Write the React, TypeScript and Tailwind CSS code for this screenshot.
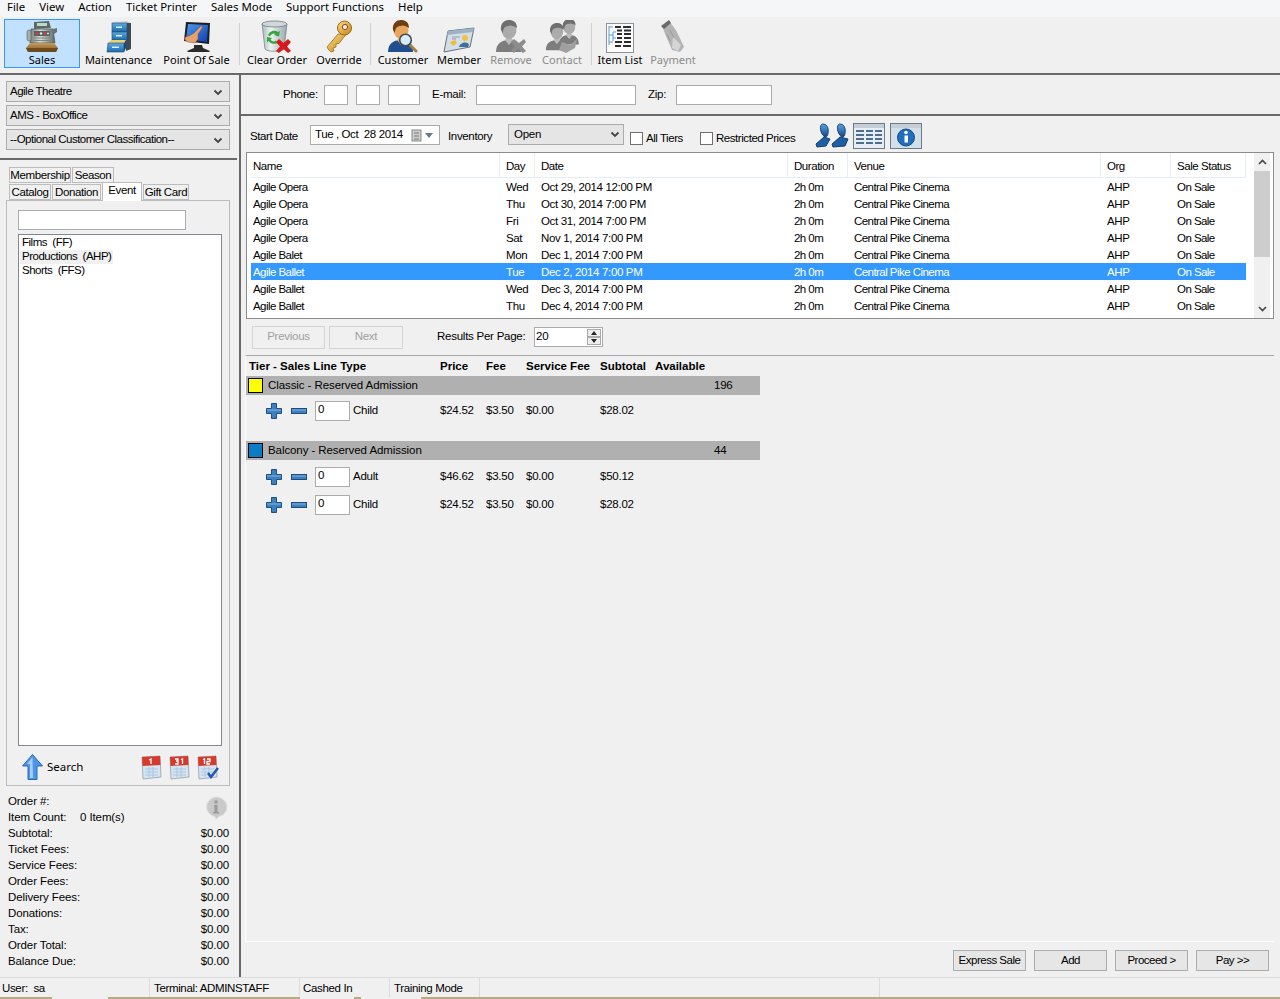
import React from "react";

const Chevron = () => (
  <svg width="10" height="7" viewBox="0 0 10 7" className="shrink-0"><path d="M1.500 1.500 5 5l3.500-3.500" fill="none" stroke="#444" strokeWidth="1.800" /></svg>
);

const Register = () => (
  <svg width="32" height="33" viewBox="0 0 32 33">
    <defs>
      <linearGradient id="rg" x1="0" x2="1" y1="0" y2="0"><stop offset="0" stopColor="#6f7a76" /><stop offset=".4" stopColor="#d5dcd9" /><stop offset="1" stopColor="#5f6a66" /></linearGradient>
      <linearGradient id="wd" x1="0" x2="0" y1="0" y2="1"><stop offset="0" stopColor="#c99a58" /><stop offset="1" stopColor="#7c5526" /></linearGradient>
    </defs>
    <path d="M8 2 23 1l2 7-17 1z" fill="#5e6965" />
    <rect x="11" y="3" width="10" height="3" fill="#b7ddc8" />
    <path d="M5 9h22l2 14H4z" fill="url(#rg)" stroke="#4c5552" strokeWidth=".7" />
    <rect x="8" y="11" width="16" height="5" fill="#59625f" />
    <circle cx="11" cy="13.500" r="1.200" fill="#e23b3b" /><circle cx="15" cy="13.500" r="1.200" fill="#e8e8e8" /><circle cx="19" cy="13.500" r="1.200" fill="#e23b3b" /><circle cx="22" cy="13.500" r="1" fill="#e8e8e8" />
    <path d="M7 18h18M7 20.500h18" stroke="#7d8784" />
    <path d="M27 9l4-1v4l-3 2z" fill="#69736f" />
    <rect x="1" y="10" width="4" height="11" rx="2" fill="#a3adaa" stroke="#5c6662" strokeWidth=".6" />
    <path d="M4 23h24l4 5-2 4H2l-2-4z" fill="url(#wd)" />
    <path d="M0 28h32l-2 4H2z" fill="#6d4a1c" />
  </svg>
);
const Cabinet = () => (
  <svg width="26" height="33" viewBox="0 0 26 33">
    <defs><linearGradient id="dr" x1="0" x2="0" y1="0" y2="1"><stop offset="0" stopColor="#5ea9e0" /><stop offset="1" stopColor="#1d6cb0" /></linearGradient></defs>
    <path d="M6 2 21 1l4 2-15 1z" fill="#c9d3da" />
    <path d="M20 3h5v26l-5 2z" fill="#3d4b55" />
    <rect x="6" y="3" width="15" height="9" fill="url(#dr)" stroke="#1f4b73" strokeWidth=".6" />
    <rect x="6" y="12" width="15" height="8" fill="url(#dr)" stroke="#1f4b73" strokeWidth=".6" />
    <rect x="10" y="6.500" width="6" height="1.500" fill="#dff0fb" /><rect x="10" y="15" width="6" height="1.500" fill="#dff0fb" />
    <path d="M5 20h15l-2 3H2z" fill="#f0d36a" />
    <path d="M2 23h16v9H1z" fill="url(#dr)" stroke="#1f4b73" strokeWidth=".6" />
    <path d="M18 23l2-3v8l-2 4z" fill="#1a4a78" />
    <rect x="6" y="26.500" width="7" height="1.500" fill="#dff0fb" />
  </svg>
);
const Monitor = () => (
  <svg width="30" height="32" viewBox="0 0 30 32">
    <defs><linearGradient id="sc" x1="0" x2="1" y1="0" y2="1"><stop offset="0" stopColor="#4d9bf0" /><stop offset="1" stopColor="#0f3fb0" /></linearGradient></defs>
    <path d="M4 1l24 1-1 21-25-3z" fill="#1e1e1e" />
    <path d="M6 3l20 1-1 17-21-3z" fill="url(#sc)" />
    <path d="M3 19c-1-3 2-4 4-4l5-3 7-7 1.500 1.500-4.500 6.500 0 5-3 4-7-1z" fill="#e4a272" stroke="#92552c" strokeWidth=".5" />
    <path d="M12 24h8l1 3 7 3-1 1H6l-1-1 7-3z" fill="#2a2a2a" />
  </svg>
);
const Bin = () => (
  <svg width="32" height="33" viewBox="0 0 32 33">
    <defs><linearGradient id="bn" x1="0" x2="1" y1="0" y2="0"><stop offset="0" stopColor="#a9b7ba" /><stop offset=".35" stopColor="#eef3f3" /><stop offset="1" stopColor="#98a6aa" /></linearGradient></defs>
    <path d="M1 4l3 25c1 3 18 3 19 0l3-25z" fill="url(#bn)" stroke="#7d8a8f" strokeWidth=".8" />
    <ellipse cx="13.500" cy="4" rx="12.500" ry="3" fill="#cfd9dc" stroke="#6d7a80" strokeWidth=".8" />
    <path d="M7 15a6.500 6.500 0 0 1 10-3l2-1-1 5.500-5-1.500 1.500-1a4 4 0 0 0-5.500 2.500zM6 17l5 1-1.500 1.500a4 4 0 0 0 5.500 1l1.500 2.500a7 7 0 0 1-9-2l-1.500 1.500z" fill="#35a83d" />
    <path d="M18 19l4.500 4 4.500-4 3 3-4 4.500 4 4.500-3 2-4.500-4-4.500 4-3-2 4-4.500-4-4.500z" fill="#d8191c" />
  </svg>
);
const KeyIcon = () => (
  <svg width="28" height="33" viewBox="0 0 28 33">
    <defs><linearGradient id="ky" x1="0" x2="1" y1="0" y2="1"><stop offset="0" stopColor="#f7dd7f" /><stop offset="1" stopColor="#c5841c" /></linearGradient></defs>
    <path d="M13 14 2 27l1 2 3 3 3-1-1-3 3-1 0-3 3-.5 7-9z" fill="url(#ky)" stroke="#8f5f10" strokeWidth=".7" />
    <circle cx="19.500" cy="8" r="7" fill="url(#ky)" stroke="#9a6a14" />
    <circle cx="20" cy="7" r="2.600" fill="#f0f0f0" stroke="#9f3b24" />
  </svg>
);
const Person = ({ gray = false }: { gray?: boolean }) => (
  <g>
    <path d="M1 32c0-8 5-12 13-12s12 4 12 12z" fill={gray ? "#7d7d7d" : "#1f4f8f"} />
    <path d="M10 20l4 5 4-5-2-3h-4z" fill={gray ? "#bcbcbc" : "#edbb85"} />
    <ellipse cx="14" cy="10" rx="7.500" ry="9" fill={gray ? "#ababab" : "#e8a75f"} />
    <path d="M6 10C5 3 10 0 14 0s8 2 8 8c-3-2-6-3-8-2-3 0-6 1-6 7z" fill={gray ? "#6f6f6f" : "#6e3d12"} />
  </g>
);
const Customer = () => (
  <svg width="32" height="33" viewBox="0 0 32 33">
    <Person />
    <path d="m22 24 7 7" stroke="#a37f44" strokeWidth="3" strokeLinecap="round" />
    <circle cx="18.500" cy="20" r="5.800" fill="#d7ecf8" stroke="#3f4b55" strokeWidth="1.600" />
  </svg>
);
const Member = () => (
  <svg width="32" height="26" viewBox="0 0 32 26">
    <path d="M5 4 31 1l-4 19L1 25z" fill="#d3dee7" stroke="#66727d" />
    <path d="M5 4 31 1l-1 4L4 8z" fill="#9db2c4" />
    <path d="M7 15l5-2 2 3-4 3z" fill="#eebd37" />
    <circle cx="22" cy="11" r="3" fill="#f0c23d" />
    <path d="M16 20c1-5 9-6 10-2l-1 2z" fill="#3d6fa5" />
    <path d="M9 10h8M9 12h4" stroke="#8da0b0" />
  </svg>
);
const RemoveIcon = () => (
  <svg width="32" height="33" viewBox="0 0 32 33">
    <Person gray />
    <path d="m16 22 3-3 5 4 5-4 2 3-4 4.500 4 4.500-3 2-5-4-4 4-3-2 4-5z" fill="#8d8d8d" />
  </svg>
);
const ContactIcon = () => (
  <svg width="34" height="33" viewBox="0 0 34 33">
    <g transform="translate(13 -1) scale(.8)"><Person gray /></g>
    <g transform="translate(0 3) scale(.85)"><Person gray /></g>
    <path d="m17 22 8 3 7-6-2 9-9 5-7-3z" fill="#a0a0a0" />
  </svg>
);
const ItemList = () => (
  <svg width="28" height="30" viewBox="0 0 28 30">
    <rect x=".5" y=".5" width="27" height="29" fill="#fbfbfb" stroke="#8c939a" />
    <path d="M3 3v19M3 4h4M3 12h4M3 19h4M7 9v9M7 9h3M7 15h3" fill="none" stroke="#5c9bd6" />
    <path d="M9 4h6M17 4h8M11 7.500h5M18 7.500h7M11 11h5M18 11h7M11 15h5M18 15h7M9 19h7M18 19h7M9 23h6M17 23h8" stroke="#2c2c2c" strokeWidth="2" />
  </svg>
);
const Payment = () => (
  <svg width="24" height="33" viewBox="0 0 24 33">
    <path d="M1 6 8 1l4 5 4 6 7 15-4 5-8-2-6-14z" fill="#b4b4b4" />
    <path d="M0 6l8-6 2 3-7 6z" fill="#6a6a6a" />
    <path d="M12 17l8 8-3 6-6-3z" fill="#d6d6d6" />
    <path d="M9 10l4 8M6 14l3 7" stroke="#9a9a9a" fill="none" />
  </svg>
);

const tools: { w: string; label: string; icon: React.ReactNode; off?: boolean; sep?: boolean }[] = [
  { w: "w-[77px]", label: "Maintenance", icon: <Cabinet /> },
  { w: "w-[79px]", label: "Point Of Sale", icon: <Monitor /> },
  { w: "w-[6px]", label: "", icon: null, sep: true },
  { w: "w-[70px]", label: "Clear Order", icon: <Bin /> },
  { w: "w-[54px]", label: "Override", icon: <KeyIcon /> },
  { w: "w-[8px]", label: "", icon: null, sep: true },
  { w: "w-[58px]", label: "Customer", icon: <Customer /> },
  { w: "w-[54px]", label: "Member", icon: <Member /> },
  { w: "w-[50px]", label: "Remove", icon: <RemoveIcon />, off: true },
  { w: "w-[52px]", label: "Contact", icon: <ContactIcon />, off: true },
  { w: "w-[6px]", label: "", icon: null, sep: true },
  { w: "w-[52px]", label: "Item List", icon: <ItemList /> },
  { w: "w-[54px]", label: "Payment", icon: <Payment />, off: true },
];

const Sel = ({ t }: { t: string }) => (
  <div className="w-[224px] h-[21px] ml-[6px] pl-[3px] pr-[6px] pt-[1px] flex items-center justify-between bg-[#e5e5e5] border border-[#acacac] tracking-[-0.5px]">
    <span>{t}</span><Chevron />
  </div>
);

const Inp = ({ w }: { w: string }) => <div className={`${w} h-[20px] bg-white border border-[#ababab] shrink-0`} />;

const rows: [string, string, string, boolean?][] = [
  ["Agile Opera", "Wed", "Oct 29, 2014 12:00 PM"],
  ["Agile Opera", "Thu", "Oct 30, 2014 7:00 PM"],
  ["Agile Opera", "Fri", "Oct 31, 2014 7:00 PM"],
  ["Agile Opera", "Sat", "Nov 1, 2014 7:00 PM"],
  ["Agile Balet", "Mon", "Dec 1, 2014 7:00 PM"],
  ["Agile Ballet", "Tue", "Dec 2, 2014 7:00 PM", true],
  ["Agile Ballet", "Wed", "Dec 3, 2014 7:00 PM"],
  ["Agile Ballet", "Thu", "Dec 4, 2014 7:00 PM"],
];

const cols = "grid grid-cols-[249px_35px_253px_60px_253px_70px_75px]";

const HeadCell = ({ t, first }: { t: string; first?: boolean }) => (
  <div className={`${first ? "pl-[2px]" : "pl-[6px]"} flex items-center border-r border-[#e5eef6] pt-[4px] tracking-[-0.45px]`}>{t}</div>
);

const Plus = () => (
  <svg width="16" height="16" viewBox="0 0 16 16" className="shrink-0"><path d="M5.500.5h5v5h5v5h-5v5h-5v-5h-5v-5h5z" fill="#3e80bf" stroke="#1b4f80" /><path d="M1 7h14" stroke="#7fb2e0" /></svg>
);
const Minus = () => (
  <svg width="16" height="6" viewBox="0 0 16 6" className="shrink-0"><rect x=".5" y=".5" width="15" height="5" fill="#3e80bf" stroke="#1b4f80" /><path d="M1 2h14" stroke="#7fb2e0" /></svg>
);

const Line = ({ kind, p, f, s, t, h }: { kind: string; p: string; f: string; s: string; t: string; h: string }) => (
  <div className={`flex items-center ${h}`}>
    <div className="w-[20px]" />
    <Plus />
    <div className="w-[9px]" />
    <Minus />
    <div className="w-[8px]" />
    <div className="w-[35px] h-[20px] bg-white border border-[#ababab] pl-[2px] leading-[15px] shrink-0">0</div>
    <div className="w-[90px] pl-[3px]">{kind}</div>
    <div className="w-[46px]">{p}</div>
    <div className="w-[40px]">{f}</div>
    <div className="w-[74px]">{s}</div>
    <div>{t}</div>
  </div>
);

const Group = ({ color, t, n }: { color: string; t: string; n: string }) => (
  <div className="w-[514px] h-[19px] flex items-center bg-[#b0b0b0]">
    <div className={`w-[15px] h-[15px] ml-[2px] border border-black ${color}`} />
    <div className="w-[451px] pl-[5px] tracking-[-0.08px]">{t}</div>
    <div>{n}</div>
  </div>
);

const Cal = ({ n, check }: { n: string; check?: boolean }) => (
  <svg width="22" height="25" viewBox="0 0 22 25" className="shrink-0">
    <path d="M1 2 19 1l1 21-18 2z" fill="#d5e4f0" stroke="#8a949c" strokeWidth=".7" />
    <path d="M1 2 19 1l.5 9L1.500 11z" fill="#d63a2c" />
    <path d="M4 14h13M4 17h13M4 20h13M8 12v10M12 12v10" stroke="#9fc0dc" strokeWidth=".7" />
    <path d={n === "1" ? "M8 5l2-1v5" : n === "31" ? "M6 4h3v2H7h2v3H6M12 4.500l1.500-.5v5" : "M6 4.500l1.500-.5v5M10 4h3v2.500h-3V9h3"} stroke="#fff" strokeWidth="1.300" fill="none" />
    {check && <path d="M11 18l3 4 7-9" fill="none" stroke="#1f56b0" strokeWidth="2.400" />}
  </svg>
);

const summary: [string, string][] = [
  ["Subtotal:", "$0.00"], ["Ticket Fees:", "$0.00"], ["Service Fees:", "$0.00"], ["Order Fees:", "$0.00"],
  ["Delivery Fees:", "$0.00"], ["Donations:", "$0.00"], ["Tax:", "$0.00"], ["Order Total:", "$0.00"], ["Balance Due:", "$0.00"],
];

const Tab = ({ t, w, active }: { t: string; w: string; active?: boolean }) => (
  <div className={`${w} shrink-0 flex items-center justify-center border border-[#bcbcbc] tracking-[-0.4px] ${active ? "h-[19px] bg-white border-b-0 pb-[3px] relative -mb-[1px]" : "h-[16px] pt-[1px] bg-[#f0f0f0]"}`}>{t}</div>
);

const Btn = ({ t }: { t: string }) => (
  <div className="w-[73px] h-[21px] pt-[1px] flex items-center justify-center bg-[#e6e6e6] border border-[#acacac] tracking-[-0.5px]">{t}</div>
);

const Check = ({ t }: { t: string }) => (
  <div className="flex items-center tracking-[-0.45px]">
    <div className="w-[13px] h-[13px] bg-white border border-[#707070]" />
    <span className="pl-[3px]">{t}</span>
  </div>
);

export default function App() {
  const ui = { fontFamily: '"Noto Sans", "Open Sans", sans-serif' };
  return (
    <div className="w-[1280px] h-[999px] overflow-hidden flex flex-col bg-[#f0f0f0] text-black text-[11.5px] tracking-[-0.25px] leading-none whitespace-pre" style={{ fontFamily: '"Liberation Sans", Arial, sans-serif' }}>
      <div className="h-[17px] bg-[#f5f6f7] flex items-center pl-[7px] pb-[3px] gap-[14px] text-[11.4px] tracking-normal" style={ui}>
        {["File", "View", "Action", "Ticket Printer", "Sales Mode", "Support Functions", "Help"].map((m) => <span key={m}>{m}</span>)}
      </div>

      <div className="h-[56px] flex pl-[4px] items-start pt-[2px] text-[11px] tracking-normal" style={ui}>
        <div className="w-[76px] h-[49px] bg-[#c2e0ff] border border-[#3399ff] flex flex-col items-center justify-between pb-[2px]">
          <div className="h-[33px] flex items-end">
            <Register />
          </div>
          <span>Sales</span>
        </div>
        {tools.map((b, i) => b.sep ? (
          <div key={i} className={`${b.w} h-[42px] mt-[4px] flex justify-center`}><div className="w-px h-full bg-[#d0d0d0]" /></div>
        ) : (
          <div key={i} className={`${b.w} h-[49px] flex flex-col items-center justify-between pb-[3px] ${b.off ? "text-[#8a8a8a]" : ""}`}>
            <div className="h-[34px] flex items-end">{b.icon}</div>
            <span>{b.label}</span>
          </div>
        ))}
      </div>

      <div className="h-[2px] bg-[#696969]" />

      <div className="flex-1 flex min-h-0">
        <div className="w-[239px] flex flex-col shrink-0">
          <div className="flex flex-col gap-[3px] pt-[6px] pb-[8px]">
            <Sel t="Agile Theatre" /><Sel t="AMS - BoxOffice" /><Sel t="--Optional Customer Classification--" />
          </div>
          <div className="h-[2px] bg-[#696969] w-[237px]" />

          <div className="pt-[7px] pl-[9px] flex gap-[1px]">
            <Tab t="Membership" w="w-[62px]" /><Tab t="Season" w="w-[42px]" />
          </div>
          <div className="pl-[9px] flex items-end gap-[1px] h-[17px]">
            <Tab t="Catalog" w="w-[42px]" /><Tab t="Donation" w="w-[49px]" />
            <Tab t="Event" w="w-[40px]" active /><Tab t="Gift Card" w="w-[46px]" />
          </div>
          <div className="ml-[6px] w-[224px] h-[586px] border border-[#bcbcbc] flex flex-col pl-[11px]">
            <div className="w-[168px] h-[20px] mt-[9px] bg-white border border-[#ababab]" />
            <div className="w-[204px] h-[512px] mt-[4px] bg-white border border-[#828790] pt-[1px] pl-[1px] flex flex-col items-start tracking-[-0.5px]">
              <div className="h-[14px] px-[2px] flex items-center">Films  (FF)</div>
              <div className="h-[14px] px-[2px] flex items-center bg-[#f0f0f0]">Productions  (AHP)</div>
              <div className="h-[14px] px-[2px] flex items-center">Shorts  (FFS)</div>
            </div>
            <div className="flex items-center mt-[8px] pl-[4px] w-[201px]">
              <svg width="21" height="26" viewBox="0 0 21 26"><path d="M10.500.5 20.500 12H15v13.500H6V12H.5z" fill="#4d95e8" stroke="#2b68b8" /><path d="M10.500 3 5 10h3v14h3z" fill="#a6cdf6" /></svg>
              <span className="pl-[4px] flex-1 text-[11.5px] tracking-normal" style={ui}>Search</span>
              <div className="flex gap-[6px]"><Cal n="1" /><Cal n="31" /><Cal n="12" check /></div>
            </div>
          </div>

          <div className="relative flex flex-col pl-[8px] pr-[10px] pt-[8px] tracking-[-0.1px]">
            <div className="h-[16px] flex items-center">Order #:</div>
            <div className="h-[16px] flex items-center"><span className="w-[72px]">Item Count:</span><span>0 Item(s)</span></div>
            {summary.map(([a, b]) => (
              <div key={a} className="h-[16px] flex items-center justify-between"><span>{a}</span><span>{b}</span></div>
            ))}
            <svg width="24" height="24" viewBox="0 0 24 24" className="absolute right-[11px] top-[10px]">
              <path d="M12 1a11 10 0 0 1 3 19.600L12 23l-1-2.400A11 10 0 0 1 12 1z" fill="#c9c9c9" stroke="#dcdcdc" />
              <path d="M10 9h3.500v7H15v1.500H9V16h1.500v-5.500H10z" fill="#9a9a9a" /><circle cx="12" cy="6" r="1.800" fill="#9a9a9a" />
            </svg>
          </div>
        </div>

        <div className="w-[2px] bg-[#696969]" />

        <div className="flex-1 flex flex-col min-w-0">
          <div className="h-[39px] flex items-center pl-[42px] shrink-0">
            <span className="w-[41px]">Phone:</span><Inp w="w-[24px]" /><div className="w-[8px]" /><Inp w="w-[24px]" /><div className="w-[8px]" /><Inp w="w-[32px]" />
            <span className="w-[44px] pl-[12px] box-content">E-mail:</span><Inp w="w-[160px]" />
            <span className="w-[28px] pl-[12px] box-content">Zip:</span><Inp w="w-[96px]" />
          </div>
          <div className="h-[2px] bg-[#696969] shrink-0" />

          <div className="h-[36px] pt-[9px] flex items-start pl-[9px] shrink-0">
            <span className="w-[60px] h-[23px] flex items-center tracking-[-0.4px]">Start Date</span>
            <div className="w-[130px] h-[20px] bg-white border border-[#ababab] flex items-center pl-[4px] pr-[4px] tracking-[-0.4px]">
              <span className="flex-1">Tue , Oct  28 2014</span>
              <svg width="24" height="13" viewBox="0 0 24 13"><rect x="1" y="1" width="9" height="11" fill="#cfcfcf" stroke="#888" /><path d="M3 4h5M3 7h5M3 10h5" stroke="#777" /><path d="M14 4h8l-4 5z" fill="#6a7a8c" /></svg>
            </div>
            <span className="w-[68px] h-[23px] pl-[8px] flex items-center tracking-[-0.35px]">Inventory</span>
            <div className="w-[116px] h-[21px] -mt-[1px] bg-[#e5e5e5] border border-[#acacac] flex items-center justify-between pl-[5px] pr-[3px]"><span>Open</span><Chevron /></div>
            <div className="w-[6px]" />
            <div className="w-[70px] mt-[7px]"><Check t="All Tiers" /></div>
            <div className="w-[115px] mt-[7px]"><Check t="Restricted Prices" /></div>
            <svg width="34" height="26" viewBox="0 0 34 26" className="shrink-0 -mt-[2px]">
              <defs><linearGradient id="pp" x1="0" x2="0" y1="0" y2="1"><stop offset="0" stopColor="#5aa5ea" /><stop offset="1" stopColor="#15467e" /></linearGradient></defs>
              <path d="M8 1c7 0 6 12 3 13-5 0-8-13-3-13zM25 1c7 0 6 12 3 13-5 0-8-13-3-13z" fill="url(#pp)" stroke="#164a85" />
              <path d="M1 21l8-7 6 2-4 7-9 1zM17 21l8-7 8 2-3 7-12 1z" fill="#1e5ea5" stroke="#12406f" />
            </svg>
            <svg width="32" height="26" viewBox="0 0 32 26" className="shrink-0 ml-[4px] -mt-[2px]">
              <rect x=".5" y=".5" width="31" height="25" fill="#e7edf2" stroke="#6b7b88" />
              <rect x="1" y="1" width="30" height="4" fill="#c5ced6" />
              <path d="M3 8h8M13 8h7M22 8h7M3 12h8M13 12h7M22 12h7M3 16h8M13 16h7M22 16h7M3 20h8M13 20h7M22 20h7" stroke="#4c6f91" strokeWidth="2" />
            </svg>
            <svg width="32" height="26" viewBox="0 0 32 26" className="shrink-0 ml-[5px] -mt-[2px]">
              <rect x=".5" y=".5" width="31" height="25" fill="#d3e0ea" stroke="#6b7b88" />
              <rect x="1" y="1" width="30" height="4" fill="#c5ced6" />
              <circle cx="16" cy="14.500" r="8.500" fill="#1f6fbd" stroke="#124a85" />
              <rect x="14.500" y="12.500" width="3.500" height="7" fill="#fff" /><circle cx="16" cy="9.500" r="1.800" fill="#fff" />
            </svg>
          </div>

          <div className="ml-[5px] w-[1028px] h-[167px] shrink-0 bg-white border border-[#8c8c8c] flex pl-[4px] pr-[2px]">
            <div className="w-[995px]">
              <div className={`${cols} h-[25px] border-b border-[#e5eef6]`}>
                <HeadCell t="Name" first /><HeadCell t="Day" /><HeadCell t="Date" /><HeadCell t="Duration" />
                <HeadCell t="Venue" /><HeadCell t="Org" /><HeadCell t="Sale Status" />
              </div>
              {rows.map(([n, d, dt, sel], i) => (
                <div key={i} className={`${cols} h-[17px] pt-[2px] items-center tracking-[-0.55px] ${sel ? "bg-[#3399ff] text-white" : ""}`}>
                  <div className="pl-[2px]">{n}</div><div className="pl-[6px] tracking-[-0.35px]">{d}</div><div className="pl-[6px] tracking-[-0.35px]">{dt}</div>
                  <div className="pl-[6px]">2h 0m</div><div className="pl-[6px]">Central Pike Cinema</div>
                  <div className="pl-[6px] tracking-[-0.35px]">AHP</div><div className="pl-[6px]">On Sale</div>
                </div>
              ))}
            </div>
            <div className="ml-[8px] w-[16px] flex flex-col items-center bg-[#f0f0f0]">
              <div className="h-[18px] flex items-center"><svg width="9" height="6" viewBox="0 0 9 6"><path d="M1 5 4.500 1.500 8 5" fill="none" stroke="#444" strokeWidth="1.600" /></svg></div>
              <div className="w-full h-[86px] bg-[#cdcdcd]" />
              <div className="flex-1" />
              <div className="h-[18px] flex items-center"><svg width="9" height="6" viewBox="0 0 9 6"><path d="M1 1l3.500 3.500L8 1" fill="none" stroke="#444" strokeWidth="1.600" /></svg></div>
            </div>
          </div>

          <div className="h-[36px] flex items-center pl-[11px] shrink-0">
            <div className="w-[73px] h-[23px] border border-[#d4d4d4] flex items-center justify-center text-[#a0a0a0]">Previous</div>
            <div className="w-[4px]" />
            <div className="w-[74px] h-[23px] border border-[#d4d4d4] flex items-center justify-center text-[#a0a0a0]">Next</div>
            <span className="w-[97px] ml-[34px]">Results Per Page:</span>
            <div className="w-[69px] h-[20px] bg-white border border-[#ababab] flex items-center justify-between pl-[1px] pr-[1px]">
              <span>20</span>
              <svg width="14" height="16" viewBox="0 0 14 16"><rect x=".5" y=".5" width="13" height="7" fill="#eee" stroke="#aaa" /><rect x=".5" y="8.500" width="13" height="7" fill="#eee" stroke="#aaa" /><path d="M7 2l3 4H4zM7 14l3-4H4z" fill="#222" /></svg>
            </div>
          </div>

          <div className="ml-[4px] mr-[6px] h-[587px] shrink-0 border-t border-[#a8a8a8] border-l border-l-white border-b border-b-white">
            <div className="h-[20px] flex items-center font-bold tracking-normal pt-[1px]">
              <div className="w-[194px] pl-[3px]">Tier - Sales Line Type</div>
              <div className="w-[46px]">Price</div><div className="w-[40px]">Fee</div>
              <div className="w-[74px]">Service Fee</div><div className="w-[55px]">Subtotal</div><div>Available</div>
            </div>
            <Group color="bg-[#ffff00]" t="Classic - Reserved Admission" n="196" />
            <Line kind="Child" p="$24.52" f="$3.50" s="$0.00" t="$28.02" h="h-[31px]" />
            <div className="h-[15px]" />
            <Group color="bg-[#0a7dc8]" t="Balcony - Reserved Admission" n="44" />
            <Line kind="Adult" p="$46.62" f="$3.50" s="$0.00" t="$50.12" h="h-[33px]" />
            <Line kind="Child" p="$24.52" f="$3.50" s="$0.00" t="$28.02" h="h-[24px]" />
          </div>

          <div className="flex justify-end gap-[8px] pr-[11px] pt-[8px] shrink-0">
            <Btn t="Express Sale" /><Btn t="Add" /><Btn t="Proceed >" /><Btn t="Pay >>" />
          </div>
        </div>
      </div>

      <div className="h-[20px] border-t border-[#dcdcdc] bg-[#f0f0f0] flex shrink-0 tracking-[-0.35px]">
        <div className="w-[150px] h-full flex items-center pt-[3px] pl-[2px] border-r border-[#dcdcdc]">User:  sa</div>
        <div className="w-[150px] h-full flex items-center pt-[3px] pl-[4px] border-r border-[#dcdcdc]">Terminal: ADMINSTAFF</div>
        <div className="w-[90px] h-full flex items-center pt-[3px] pl-[3px] border-r border-[#dcdcdc]">Cashed In</div>
        <div className="w-[90px] h-full flex items-center pt-[3px] pl-[4px] border-r border-[#dcdcdc]">Training Mode</div>
        <div className="w-[400px] h-full border-r border-[#dcdcdc]" />
      </div>
      <div className="h-[2px] bg-[#b9a983] shrink-0 flex">
        <div className="w-[52px]" /><div className="w-[56px] bg-[#f0f0f0]" /><div className="w-[192px]" /><div className="w-[54px] bg-[#f0f0f0]" /><div className="w-[7px]" /><div className="w-[60px] bg-[#f0f0f0]" />
      </div>
    </div>
  );
}
